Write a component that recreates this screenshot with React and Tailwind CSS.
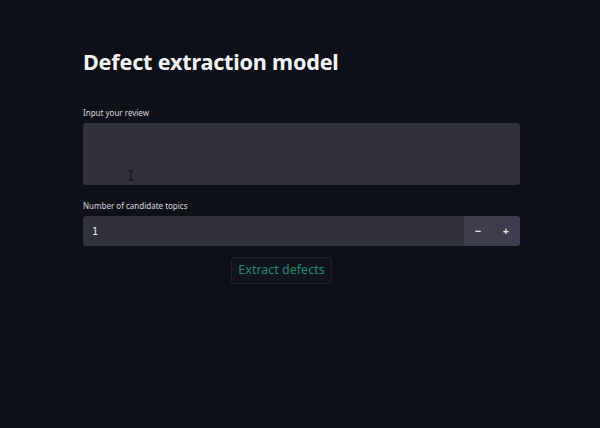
export default function App() {
  return (
    <div
      className="w-[600px] h-[428px] bg-[#0e1017] text-[#fafafa] overflow-hidden"
      style={{ fontFamily: '"Noto Sans", "Open Sans", sans-serif' }}
    >
      <div className="pl-[83px] pr-[80px] pt-[46px]">
        <h1 className="text-[21.6px] font-bold leading-[32px] tracking-[-0.2px] text-[#f4f4f6]">
          Defect extraction model
        </h1>

        <div className="mt-[29px] text-[8px] leading-[12px] text-[#d8d8de]">
          Input your review
        </div>
        <div className="relative mt-[4px] h-[62px] rounded-[3px] bg-[#31313c]">
          <svg
            className="absolute left-[45px] top-[47px]"
            width="6"
            height="11"
            viewBox="0 0 6 11"
          >
            <path
              d="M0.5 0.8h5M3 0.8v9.4M0.5 10.2h5"
              stroke="#111"
              strokeWidth="1"
              fill="none"
            />
          </svg>
        </div>

        <div className="mt-[15px] text-[8px] leading-[12px] text-[#d8d8de]">
          Number of candidate topics
        </div>
        <div className="mt-[4px] flex h-[30px] rounded-[3px] overflow-hidden">
          <div
            className="flex flex-1 items-center bg-[#31313c] pl-[9px] text-[10px] text-[#e6e6ea]"
            style={{ fontFamily: '"DejaVu Sans Mono", monospace' }}
          >
            1
          </div>
          <div className="flex w-[56px] items-center justify-around bg-[#3d3d4e] text-[11px] font-bold text-[#e6e6ea]">
            <span>−</span>
            <span>+</span>
          </div>
        </div>

        <div className="mt-[11px] flex">
          <button className="ml-[148px] h-[27px] w-[101px] rounded-[3px] border border-[#20222b] bg-[#12141b] text-[12.5px] text-[#1f8a78]">
            Extract defects
          </button>
        </div>
      </div>
    </div>
  );
}
